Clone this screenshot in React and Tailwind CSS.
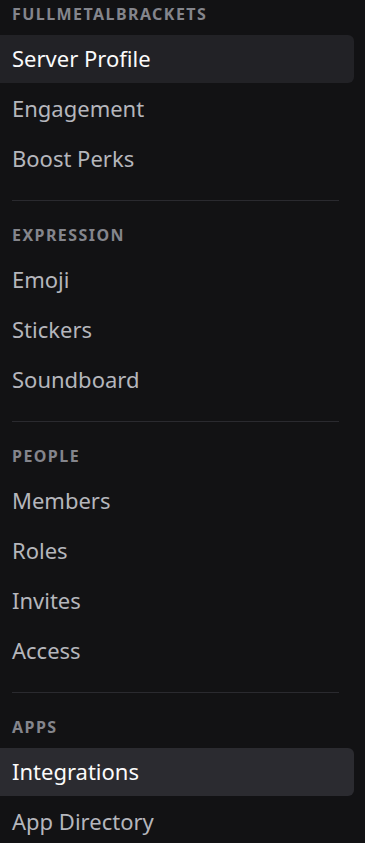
import React from "react";

const sections = [
  { title: "FULLMETALBRACKETS", items: ["Server Profile", "Engagement", "Boost Perks"] },
  { title: "EXPRESSION", items: ["Emoji", "Stickers", "Soundboard"] },
  { title: "PEOPLE", items: ["Members", "Roles", "Invites", "Access"] },
  { title: "APPS", items: ["Integrations", "App Directory"] },
];

function Item({ label }) {
  if (label === "Server Profile") {
    return (
      <div className="h-[48px] w-[354px] flex items-center pl-[12px] pb-[2px] rounded-r-[6px] bg-[#222226] text-[#fbfbfb] text-[22px] font-normal">
        {label}
      </div>
    );
  }
  if (label === "Integrations") {
    return (
      <div className="h-[48px] w-[354px] flex items-center pl-[12px] pb-[2px] rounded-r-[6px] bg-[#2b2b30] text-[#fbfbfb] text-[22px] font-normal">
        {label}
      </div>
    );
  }
  return (
    <div className="h-[48px] w-[354px] flex items-center pl-[12px] pb-[2px] text-[#b5b6bc] text-[22px] font-normal">
      {label}
    </div>
  );
}

export default function App() {
  return (
    <div
      className="w-[365px] h-[843px] overflow-hidden bg-[#121214] pt-[2px]"
      style={{ fontFamily: '"Noto Sans", "Open Sans", sans-serif' }}
    >
      {sections.map((s, i) => (
        <div key={s.title}>
          {i > 0 && <div className="ml-[12px] w-[327px] h-px bg-[#2a2a2f] mt-[17px] mb-[22px]" />}
          <div className="h-[24px] flex items-center pl-[12px] mb-[9px] text-[16px] font-bold tracking-[0.09em] text-[#84858c]">
            {s.title}
          </div>
          <div className="flex flex-col gap-[2px]">
            {s.items.map((it) => (
              <Item key={it} label={it} />
            ))}
          </div>
        </div>
      ))}
    </div>
  );
}
